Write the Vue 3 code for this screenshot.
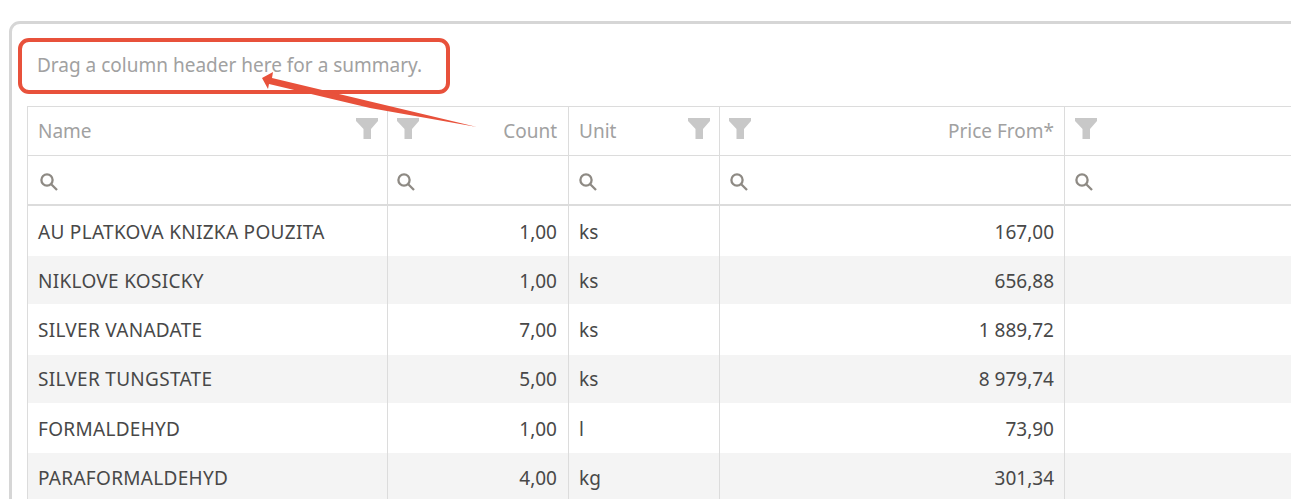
<script setup>
const rows = [
  { name: 'AU PLATKOVA KNIZKA POUZITA', count: '1,00', unit: 'ks', price: '167,00' },
  { name: 'NIKLOVE KOSICKY', count: '1,00', unit: 'ks', price: '656,88' },
  { name: 'SILVER VANADATE', count: '7,00', unit: 'ks', price: '1 889,72' },
  { name: 'SILVER TUNGSTATE', count: '5,00', unit: 'ks', price: '8 979,74' },
  { name: 'FORMALDEHYD', count: '1,00', unit: 'l', price: '73,90' },
  { name: 'PARAFORMALDEHYD', count: '4,00', unit: 'kg', price: '301,34' },
]
</script>

<template>
  <div class="page">
    <section class="card">
      <p class="summary">Drag a column header here for a summary.</p>
      <div class="grid">
        <div class="head-row row">
          <div class="cell head"><span>Name</span><svg class="filter end" viewBox="0 0 22 22"><path d="M0 1h22v3l-7 8v10H7.500V12L0 4z" /></svg></div>
          <div class="cell head right count"><svg class="filter start" viewBox="0 0 22 22"><path d="M0 1h22v3l-7 8v10H7.500V12L0 4z" /></svg><span>Count</span></div>
          <div class="cell head"><span>Unit</span><svg class="filter end" viewBox="0 0 22 22"><path d="M0 1h22v3l-7 8v10H7.500V12L0 4z" /></svg></div>
          <div class="cell head right"><svg class="filter start" viewBox="0 0 22 22"><path d="M0 1h22v3l-7 8v10H7.500V12L0 4z" /></svg><span>Price From*</span></div>
          <div class="cell head"><svg class="filter blank" viewBox="0 0 22 22"><path d="M0 1h22v3l-7 8v10H7.500V12L0 4z" /></svg></div>
        </div>
        <div class="search-row row">
          <div v-for="n in 5" :key="n" class="cell search">
            <svg viewBox="0 0 18 18" class="glass"><circle cx="7" cy="7" r="5.600" /><path d="M11 11l6 6" /></svg>
          </div>
        </div>
        <div v-for="(r, i) in rows" :key="r.name" class="row data" :class="{ alt: i % 2 === 1 }">
          <div class="cell name">{{ r.name }}</div>
          <div class="cell num count">{{ r.count }}</div>
          <div class="cell">{{ r.unit }}</div>
          <div class="cell num">{{ r.price }}</div>
          <div class="cell"></div>
        </div>
      </div>
    </section>

    <div class="callout"></div>
    <svg class="arrow" width="500" height="140" viewBox="0 0 500 140">
      <path d="M262 78 L273 72 L272 78 L477 127 L370 108 L269 84 L268 89 Z" fill="#e8513b" />
    </svg>
  </div>
</template>

<style scoped>
.page {
  position: relative;
  width: 1291px;
  height: 499px;
  overflow: hidden;
  background: #fff;
  font-family: "Noto Sans", "Open Sans", sans-serif;
  padding: 21px 0 0 9px;
  box-sizing: border-box;
}
.card {
  width: 1400px;
  height: 600px;
  box-sizing: border-box;
  border: 3px solid #d6d6d6;
  border-radius: 11px;
  padding: 0 0 0 15px;
}
.summary {
  margin: 0;
  height: 82px;
  padding: 27px 0 0 10px;
  box-sizing: border-box;
  font-size: 19px;
  line-height: 28px;
  color: #a1a1a1;
}
.grid {
  border-top: 1px solid #dcdcdc;
  border-left: 1px solid #dcdcdc;
  width: 1350px;
}
.row {
  display: grid;
  grid-template-columns: 360px 181px 151px 345px 1fr;
  box-sizing: border-box;
}
.cell {
  box-sizing: border-box;
  display: flex;
  align-items: center;
  padding: 0 10px;
  border-right: 1px solid #dcdcdc;
  font-size: 19px;
  color: #484848;
  min-width: 0;
  white-space: nowrap;
}
.name { letter-spacing: 0.3px; }
.head-row {
  height: 49px;
  border-bottom: 1px solid #dcdcdc;
}
.head {
  justify-content: space-between;
  color: #a1a1a1;
  position: relative;
}
.right { justify-content: flex-end; }
.count { padding-right: 11px; }
.filter {
  width: 22px;
  height: 22px;
  fill: #c8c8c8;
  position: absolute;
  top: 10px;
}
.end { right: 9px; }
.start { left: 9px; }
.blank { left: 10px; }
.search-row {
  height: 50px;
  border-bottom: 2px solid #dcdcdc;
}
.glass {
  width: 18px;
  height: 18px;
  fill: none;
  stroke: #8e8a84;
  stroke-width: 2.300;
  margin-top: 4px;
}
.search:nth-child(1) .glass { margin-left: 2px; }
.search:nth-child(2) .glass { margin-left: -1px; }
.data { height: 50px; }
.alt { height: 48px; background: #f4f4f4; }
.data:nth-child(5) { height: 51px; }
.data:nth-child(-n+4) .cell { padding-top: 2px; }
.data:nth-child(5) .cell { padding-top: 1px; }
.data:nth-child(n+7) .cell { padding-top: 2px; }
.num { justify-content: flex-end; }
.callout {
  position: absolute;
  left: 18px;
  top: 38px;
  width: 432px;
  height: 56px;
  box-sizing: border-box;
  border: 4px solid #e8513b;
  border-radius: 11px;
}
.arrow {
  position: absolute;
  left: 0;
  top: 0;
}
</style>
